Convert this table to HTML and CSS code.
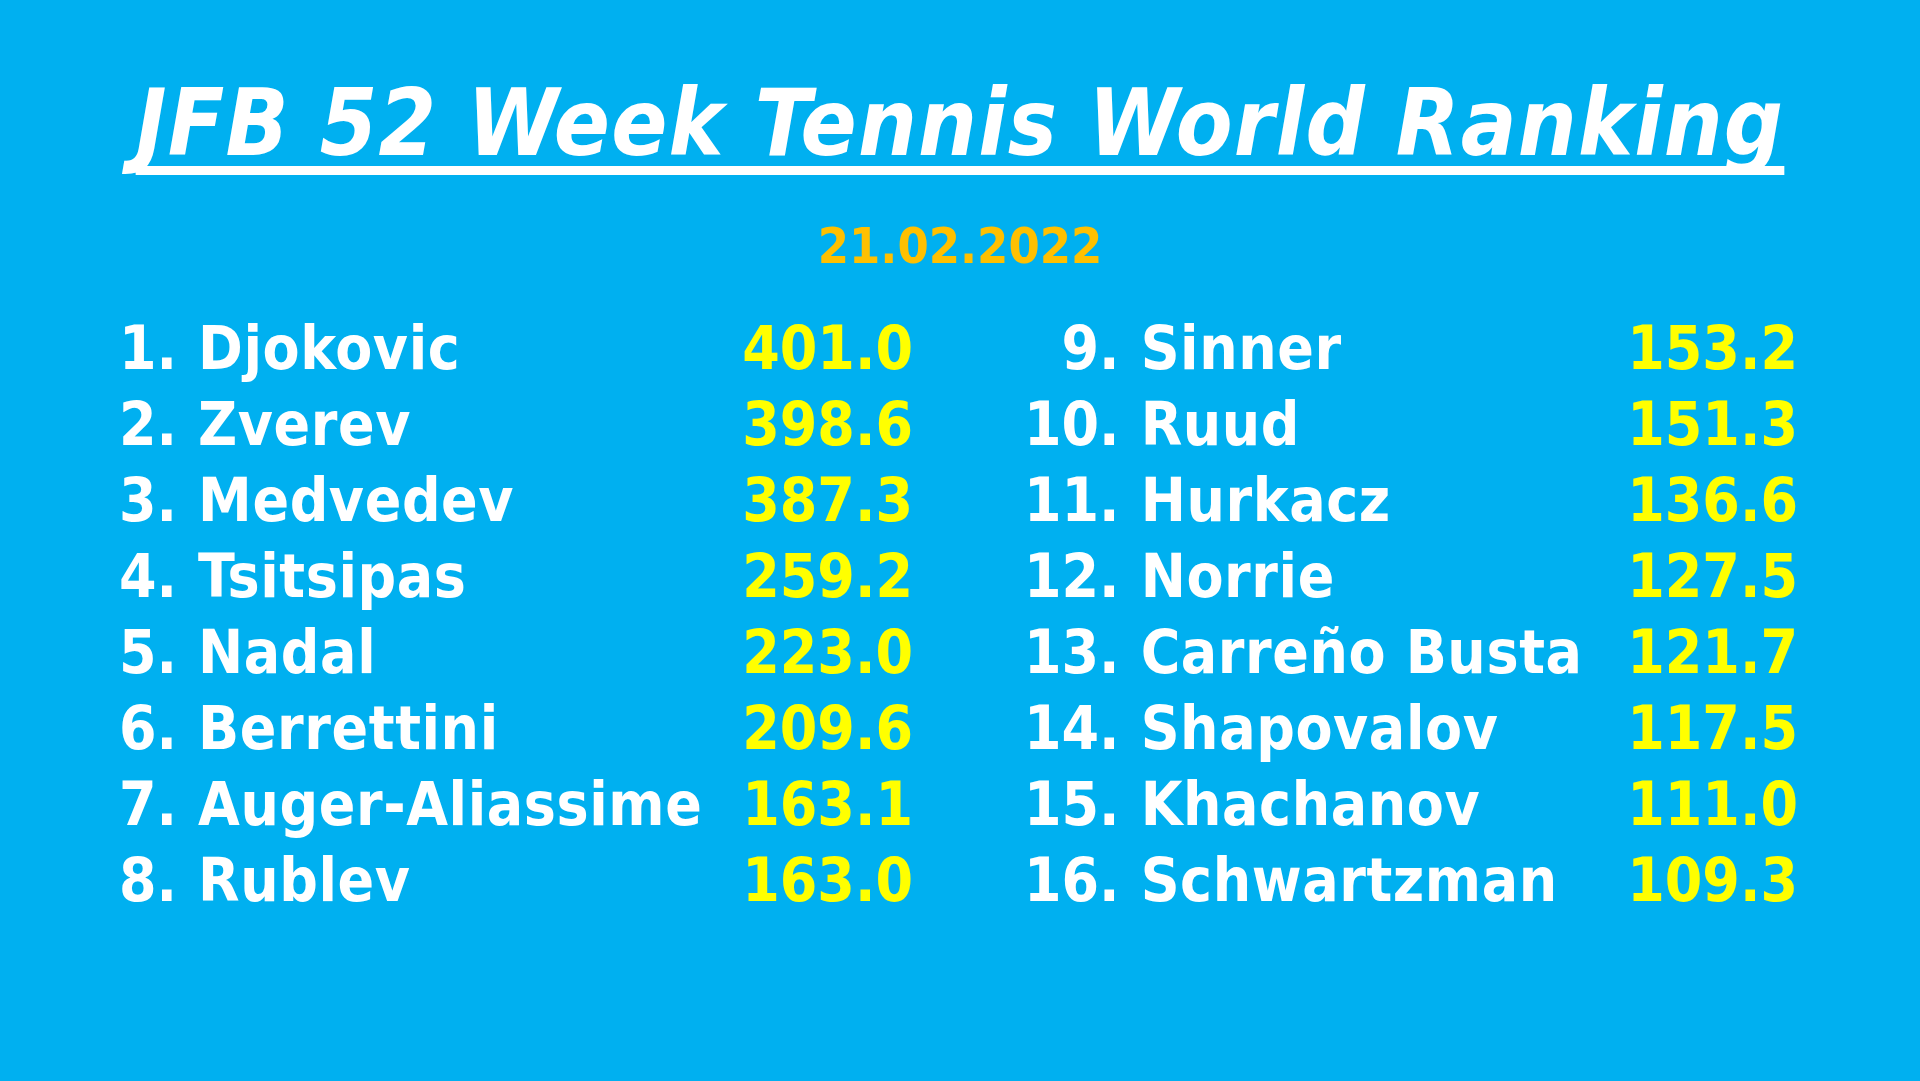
FILE: index.html
```html
<!DOCTYPE html>
<html>
<head>
<meta charset="utf-8">
<link rel="stylesheet" href="styles.css">
</head>
<body>
<div class="slide">
  <h1 class="title">JFB 52 Week Tennis World Ranking</h1>
  <div class="date">21.02.2022</div>
  <div class="columns">
    <div class="col col-left">
      <span class="rank">1.</span><span class="name">Djokovic</span><span class="pts">401.0</span>
      <span class="rank">2.</span><span class="name">Zverev</span><span class="pts">398.6</span>
      <span class="rank">3.</span><span class="name">Medvedev</span><span class="pts">387.3</span>
      <span class="rank">4.</span><span class="name">Tsitsipas</span><span class="pts">259.2</span>
      <span class="rank">5.</span><span class="name">Nadal</span><span class="pts">223.0</span>
      <span class="rank">6.</span><span class="name">Berrettini</span><span class="pts">209.6</span>
      <span class="rank">7.</span><span class="name">Auger-Aliassime</span><span class="pts">163.1</span>
      <span class="rank">8.</span><span class="name">Rublev</span><span class="pts">163.0</span>
    </div>
    <div class="col col-right">
      <span class="rank">9.</span><span class="name">Sinner</span><span class="pts">153.2</span>
      <span class="rank">10.</span><span class="name">Ruud</span><span class="pts">151.3</span>
      <span class="rank">11.</span><span class="name">Hurkacz</span><span class="pts">136.6</span>
      <span class="rank">12.</span><span class="name">Norrie</span><span class="pts">127.5</span>
      <span class="rank">13.</span><span class="name">Carreño Busta</span><span class="pts">121.7</span>
      <span class="rank">14.</span><span class="name">Shapovalov</span><span class="pts">117.5</span>
      <span class="rank">15.</span><span class="name">Khachanov</span><span class="pts">111.0</span>
      <span class="rank">16.</span><span class="name">Schwartzman</span><span class="pts">109.3</span>
    </div>
  </div>
</div>
</body>
</html>
```
FILE: styles.css
```css
html, body {
  margin: 0;
  padding: 0;
  background: #00B0F0;
}
body {
  width: 1920px;
  height: 1081px;
  overflow: hidden;
  font-family: "DejaVu Sans Condensed", "DejaVu Sans", sans-serif;
  font-stretch: condensed;
  font-weight: bold;
  color: #ffffff;
}
.slide {
  display: flex;
  flex-direction: column;
  align-items: center;
  padding-top: 78px;
}
.title {
  margin: 0;
  font-size: 92px;
  line-height: 92px;
  letter-spacing: 1.2px;
  font-style: italic;
  font-weight: bold;
  text-decoration: underline;
  text-decoration-thickness: 9px;
  text-underline-offset: 11px;
  text-decoration-skip-ink: none;
}
.date {
  margin-top: 51px;
  font-size: 50px;
  line-height: 50px;
  color: #FFC000;
}
.columns {
  align-self: stretch;
  display: flex;
  gap: 111px;
  padding-left: 119px;
  margin-top: 39px;
}
.col {
  display: grid;
  grid-template-columns: auto 1fr auto;
  column-gap: 21px;
  font-size: 60px;
  line-height: 76px;
}
.col-left { width: 794px; }
.col-right { width: 774px; }
.rank { text-align: right; }
.name { letter-spacing: 0.6px; }
.pts { color: #FFFF00; text-align: right; }
```
